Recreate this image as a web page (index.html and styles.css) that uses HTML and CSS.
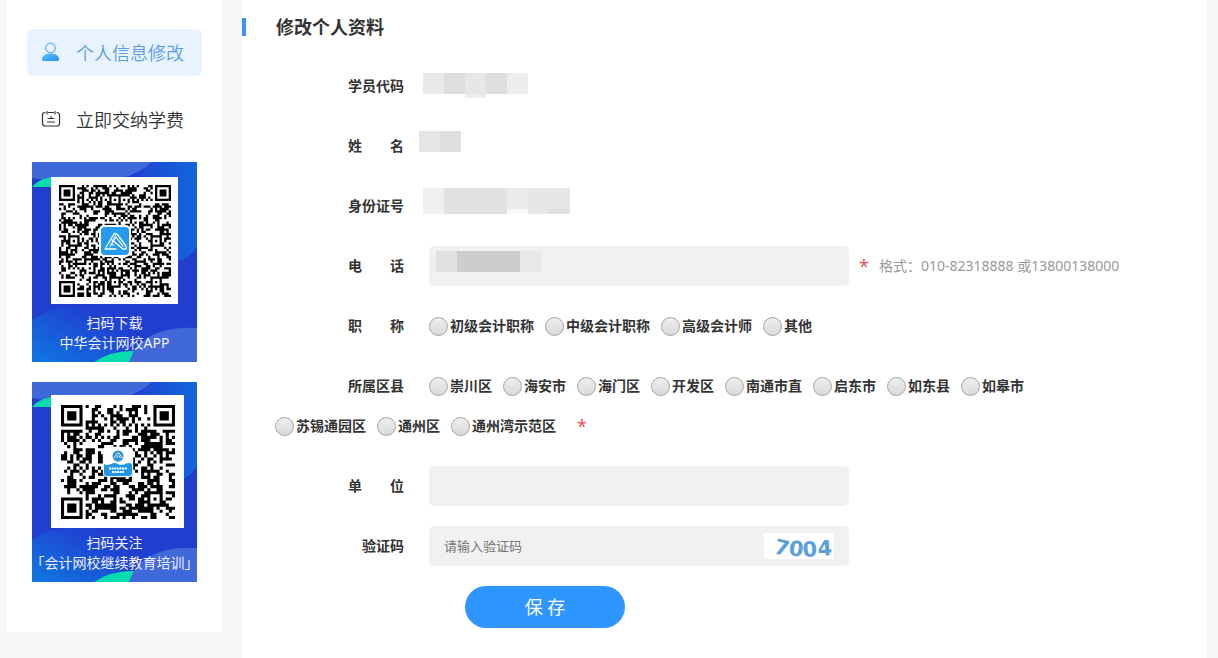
FILE: index.html
```html
<!DOCTYPE html>
<html lang="zh-CN">
<head>
    <meta charset="UTF-8">
    <meta name="viewport" content="width=device-width, initial-scale=1.0">
    <title>修改个人资料</title>
    <link rel="stylesheet" href="styles.css">
</head>
<body>

<div class="page">
    <aside class="sidebar">
        <nav class="menu">
            <a href="#" class="menu-item active">
                <svg class="menu-icon" width="20" height="20" viewBox="0 0 20 20">
                    <defs>
                        <linearGradient id="userFill" x1="0" y1="0" x2="1" y2="1">
                            <stop offset="0" stop-color="#5cc3fb"/>
                            <stop offset="1" stop-color="#2b8af5"/>
                        </linearGradient>
                    </defs>
                    <circle cx="9.5" cy="6" r="4.8" fill="none" stroke="#64aef2" stroke-width="1.2"/>
                    <path d="M1 17.5C1 13.5 5 11.5 9.5 11.500S18 13.500 18 17.500Q18 19 16.500 19H2.500Q1 19 1 17.500z" fill="url(#userFill)"/>
                </svg>
                个人信息修改
            </a>
            <a href="#" class="menu-item">
                <svg class="menu-icon" width="20" height="20" viewBox="0 0 20 20" fill="none" stroke="#333" stroke-width="1.2" stroke-linecap="round">
                    <path d="M4 3.500Q1.500 3.500 1.500 6V14.500Q1.500 17 4 17H16Q18.500 17 18.500 14.500V6Q18.500 3.500 16 3.500M7.500 3.500H12.500M6 2.500V5M14 2.500V5M7 9.500H13M6.500 13H13.500M10 7.500V9.500"/>
                </svg>
                立即交纳学费
            </a>
        </nav>

        <figure class="qr-card">
            <svg class="qr-art" viewBox="0 0 165 200">
                <defs>
                    <linearGradient id="glow" x1="0" y1="0" x2="1" y2="0">
                        <stop offset="0" stop-color="#1f44d2"/>
                        <stop offset="1" stop-color="#1266dc"/>
                    </linearGradient>
                    <linearGradient id="wave" x1="0" y1="1" x2="1" y2="0">
                        <stop offset="0" stop-color="#0f78e2"/>
                        <stop offset="0.700" stop-color="#1f44d2"/>
                    </linearGradient>
                    <g id="cardBack">
                        <rect width="165" height="200" fill="#203fcf"/>
                        <path d="M100 24Q110 8 120 0H165V84Q157 97 146 99Q100 80 100 24z" fill="url(#glow)"/>
                        <path d="M0 0H120Q103 16 75 18Q30 22 0 16z" fill="#3f68d8"/>
                        <path d="M0 25Q10 13 32 15V25z" fill="#08dcae"/>
                        <path d="M0 158Q25 141 60 147Q85 151 95 165L100 185Q80 190 62 200H0z" fill="url(#wave)"/>
                        <path d="M97 200Q105 175 135 168Q150 165 165 166V200z" fill="#4068d8"/>
                        <path d="M62 200Q80 188 102 189L97 200z" fill="#08dcae"/>
                    </g>
                </defs>
                <use href="#cardBack"/>
                <rect x="19" y="15" width="127" height="127" fill="#fff"/>
                <svg x="27" y="23" width="112" height="112" viewBox="0 0 49 49">
                    <path class="qr-code" data-size="49" data-seed="17" data-marks="24,6 42,24 6,24 24,42 42,42"/>
                </svg>
                <rect x="67" y="63" width="32" height="32" rx="5" fill="#fff"/>
                <rect x="69" y="65" width="28" height="28" rx="4" fill="#259bf0"/>
                <g fill="none" stroke="#fff" stroke-linejoin="round" stroke-linecap="round">
                    <path d="M84 87H73L82 72Q83 71 85 72L94 84Q95 88 91 87L80 78" stroke-width="1.300"/>
                    <path d="M82 83H79L84 75L91 84" stroke-width="1.200"/>
                    <path d="M78 85L84 72M82 79L91 87" stroke-width="0.800"/>
                </g>
            </svg>
            <figcaption>
                <span>扫码下载</span>
                <span>中华会计网校APP</span>
            </figcaption>
        </figure>

        <figure class="qr-card">
            <svg class="qr-art" viewBox="0 0 165 200">
                <use href="#cardBack"/>
                <rect x="19" y="13" width="133" height="133" fill="#fff"/>
                <svg x="29" y="23" width="114" height="114" viewBox="0 0 37 37">
                    <path class="qr-code" data-size="37" data-seed="52" data-marks="30,30"/>
                </svg>
                <rect x="71" y="65" width="30" height="30" rx="4" fill="#fff" stroke="#ddd" stroke-width="0.500"/>
                <circle cx="86" cy="74" r="5.500" fill="#2e8fd4"/>
                <path d="M82 76L85.500 71Q86 70.500 87 71L90.500 76M84.500 76L86.500 73.500L88.500 76" fill="none" stroke="#fff" stroke-width="0.900"/>
                <path d="M72 82Q75 84 79 82T86 82T93 82T100 82V91Q100 94 97 94H75Q72 94 72 91z" fill="#2196e8"/>
                <path d="M77 86.500H95" stroke="#fff" stroke-width="2" stroke-dasharray="2 .6"/>
                <path d="M80 90H92" stroke="#fff" stroke-width="1.800" stroke-dasharray="2 .6"/>
            </svg>
            <figcaption>
                <span>扫码关注</span>
                <span>「会计网校继续教育培训」</span>
            </figcaption>
        </figure>
    </aside>

    <main class="content">
        <h1 class="title">修改个人资料</h1>

        <form class="profile-form" id="profileForm">
            <div class="form-row">
                <span class="row-label">学员代码</span>
                <svg class="masked" width="180" height="40" role="img" aria-label="学员代码">
                    <path d="M4 7h21v21H4z" fill="#e9e9e9"/>
                    <path d="M25 7h21v21H25zM67 7h21v21H67z" fill="#dedede"/>
                    <path d="M46 7h21v21H46z" fill="#e7e7e7"/>
                    <path d="M88 7h21v21H88zM46 28h21v4H46z" fill="#ededed"/>
                </svg>
            </div>

            <div class="form-row">
                <span class="row-label">姓　　名</span>
                <svg class="masked" width="180" height="40" role="img" aria-label="姓名">
                    <path d="M0 5h21v21H0z" fill="#e5e5e4"/>
                    <path d="M21 5h21v21H21z" fill="#dfdfdf"/>
                </svg>
            </div>

            <div class="form-row">
                <span class="row-label">身份证号</span>
                <svg class="masked" width="180" height="40" role="img" aria-label="身份证号">
                    <path d="M4 2h21v26H4z" fill="#f0f0f0"/>
                    <path d="M25 2h63v26H25z" fill="#e2e2e1"/>
                    <path d="M88 2h21v21H88z" fill="#ebebeb"/>
                    <path d="M88 23h21v5H88z" fill="#f8f8f8"/>
                    <path d="M109 2h42v26H109z" fill="#e7e7e7"/>
                    <path d="M130 23h21v5H130z" fill="#e0e0e0"/>
                </svg>
            </div>

            <div class="form-row">
                <label class="row-label" for="phone">电　　话</label>
                <div class="field">
                    <input type="text" id="phone">
                    <svg class="field-mask" width="105" height="21">
                        <path d="M0 0h21v21H0z" fill="#e1e1e0"/>
                        <path d="M21 0h63v21H21z" fill="#cdcdcd"/>
                        <path d="M84 0h21v21H84z" fill="#e8e8e8"/>
                    </svg>
                </div>
                <span class="star">*</span>
                <span class="hint">格式：010-82318888 或13800138000</span>
            </div>

            <div class="form-row options" role="radiogroup" aria-labelledby="rankLabel">
                <span class="row-label" id="rankLabel">职　　称</span>
                <label class="option"><input type="radio" name="rank" value="1">初级会计职称</label>
                <label class="option"><input type="radio" name="rank" value="2">中级会计职称</label>
                <label class="option"><input type="radio" name="rank" value="3">高级会计师</label>
                <label class="option"><input type="radio" name="rank" value="4">其他</label>
            </div>

            <div class="form-row options" role="radiogroup" aria-labelledby="areaLabel">
                <span class="row-label" id="areaLabel">所属区县</span>
                <label class="option"><input type="radio" name="area" value="1">崇川区</label>
                <label class="option"><input type="radio" name="area" value="2">海安市</label>
                <label class="option"><input type="radio" name="area" value="3">海门区</label>
                <label class="option"><input type="radio" name="area" value="4">开发区</label>
                <label class="option"><input type="radio" name="area" value="5">南通市直</label>
                <label class="option"><input type="radio" name="area" value="6">启东市</label>
                <label class="option"><input type="radio" name="area" value="7">如东县</label>
                <label class="option"><input type="radio" name="area" value="8">如皋市</label>
                <label class="option"><input type="radio" name="area" value="9">苏锡通园区</label>
                <label class="option"><input type="radio" name="area" value="10">通州区</label>
                <label class="option"><input type="radio" name="area" value="11">通州湾示范区</label>
                <span class="star">*</span>
            </div>

            <div class="form-row">
                <label class="row-label" for="company">单　　位</label>
                <div class="field">
                    <input type="text" id="company">
                </div>
            </div>

            <div class="form-row">
                <label class="row-label" for="code">验证码</label>
                <div class="field">
                    <input type="text" id="code" placeholder="请输入验证码">
                    <svg class="captcha" width="70" height="26" viewBox="0 0 70 26">
                        <rect width="70" height="26" fill="#fff"/>
                        <text x="9 24 39 54" y="20 22 24 23" rotate="14 8 -4 -4">7004</text>
                    </svg>
                </div>
            </div>

            <button type="submit" class="save">保 存</button>
        </form>
    </main>
</div>

<script src="main.js"></script>
</body>
</html>
```
FILE: styles.css
```css
* {
    box-sizing: border-box;
}

body {
    margin: 0;
    font-family: "Noto Sans", "Noto Sans CJK SC", sans-serif;
    font-size: 14px;
    color: #333;
    background-color: #f7f7f7;
}

.page {
    display: flex;
    align-items: flex-start;
    gap: 20px;
    min-height: 100vh;
    padding: 0 11px 0 7px;
}

/* sidebar */
.sidebar {
    flex: none;
    width: 215px;
    padding: 29px 20px 50px;
    background-color: #fff;
}

.menu {
    display: flex;
    flex-direction: column;
    gap: 20px;
    margin-bottom: 19px;
}

.menu-item {
    display: flex;
    align-items: center;
    gap: 15px;
    height: 47px;
    padding: 0 0 2px 14px;
    border-radius: 6px;
    font-family: "Noto Sans CJK SC", sans-serif;
    font-size: 18px;
    font-weight: 350;
    color: #333;
    text-decoration: none;
    white-space: nowrap;
}

.menu-item.active {
    color: #5a9de6;
    background-color: #e8f3ff;
}

.menu-icon {
    flex: none;
}

.qr-card {
    position: relative;
    display: flex;
    flex-direction: column;
    justify-content: flex-end;
    width: 165px;
    height: 200px;
    margin: 0 auto 20px;
}

.qr-card:last-child {
    margin-bottom: 0;
}

.qr-art {
    position: absolute;
    top: 0;
    left: 0;
    width: 100%;
    height: 100%;
}

.qr-card figcaption {
    position: relative;
    display: flex;
    flex-direction: column;
    align-items: center;
    padding-bottom: 9px;
    line-height: 20px;
    white-space: nowrap;
    color: #f0f1ff;
}

/* content */
.content {
    flex: 1;
    align-self: stretch;
    min-width: 0;
    padding: 18px 0 30px;
    background-color: #fff;
}

.title {
    margin: 0;
    padding-left: 30px;
    border-left: 4px solid #3a92f5;
    font-size: 18px;
    line-height: 18px;
}

.profile-form {
    display: flex;
    flex-direction: column;
    gap: 20px;
    padding: 30px 0 0 33px;
}

.form-row {
    display: flex;
    align-items: center;
    line-height: 40px;
}

.row-label {
    flex: none;
    width: 129px;
    margin-right: 25px;
    font-weight: bold;
    text-align: right;
}

.masked {
    margin-left: -10px;
}

.field {
    position: relative;
    flex: 0 1 420px;
}

.field input {
    display: block;
    width: 100%;
    height: 40px;
    padding: 0 15px;
    border: none;
    border-radius: 5px;
    outline: none;
    background-color: #f1f1f1;
    font-family: inherit;
    font-size: 13px;
    color: #333;
}

.field input::placeholder {
    color: #757575;
}

.field-mask {
    position: absolute;
    top: 5px;
    left: 7px;
}

.captcha {
    position: absolute;
    top: 7px;
    right: 15px;
    overflow: visible;
    font-family: "DejaVu Sans", sans-serif;
    font-size: 21px;
    font-weight: bold;
    fill: #5b9fdc;
}

.star {
    margin: 0 10px;
    font-size: 18px;
    color: #e4574f;
}

.hint {
    color: #999;
    white-space: nowrap;
}

.options {
    flex-wrap: wrap;
    padding-right: 90px;
}

.option {
    display: flex;
    align-items: center;
    gap: 2px;
    margin-right: 11px;
    font-weight: bold;
    white-space: nowrap;
}

.option input {
    appearance: none;
    width: 19px;
    height: 19px;
    margin: 0;
    border: 1px solid #a5a5a5;
    border-radius: 50%;
    background: linear-gradient(#eee, #dadada);
}

.option input:checked {
    border: 5px solid #3096ff;
}

.save {
    width: 160px;
    height: 42px;
    margin-left: 190px;
    padding-bottom: 3px;
    border: none;
    border-radius: 21px;
    background-color: #3096ff;
    font-family: inherit;
    font-size: 18px;
    color: #fff;
    cursor: pointer;
}

.save:hover {
    background-color: #1f86f0;
}
```
FILE: main.js
```js
// fill each code with its modules, one path per code
document.querySelectorAll('.qr-code').forEach(function(path) {
    const size = Number(path.dataset.size);
    let seed = Number(path.dataset.seed);
    const marks = path.dataset.marks.split(' ').map(function(mark) {
        return mark.split(',').map(Number);
    });

    function random() {
        seed = (seed * 16807) % 2147483647;
        return seed / 2147483647;
    }

    function isDark(x, y) {
        const bit = random() < 0.52;

        // three big corner squares
        const corners = [[3, 3], [size - 4, 3], [3, size - 4]];
        for (const [cx, cy] of corners) {
            const d = Math.max(Math.abs(x - cx), Math.abs(y - cy));
            if (d <= 4) return d === 3 || d <= 1;
        }

        // small alignment squares
        for (const [cx, cy] of marks) {
            const d = Math.max(Math.abs(x - cx), Math.abs(y - cy));
            if (d <= 2) return d !== 1;
        }

        if (x === 6 || y === 6) return (x + y) % 2 === 0;
        return bit;
    }

    let d = '';
    for (let y = 0; y < size; y++) {
        for (let x = 0; x < size; x++) {
            if (isDark(x, y)) d += 'M' + x + ' ' + y + 'h1v1h-1z';
        }
    }
    path.setAttribute('d', d);
});

document.getElementById('profileForm').addEventListener('submit', function(event) {
    event.preventDefault();
});
```
